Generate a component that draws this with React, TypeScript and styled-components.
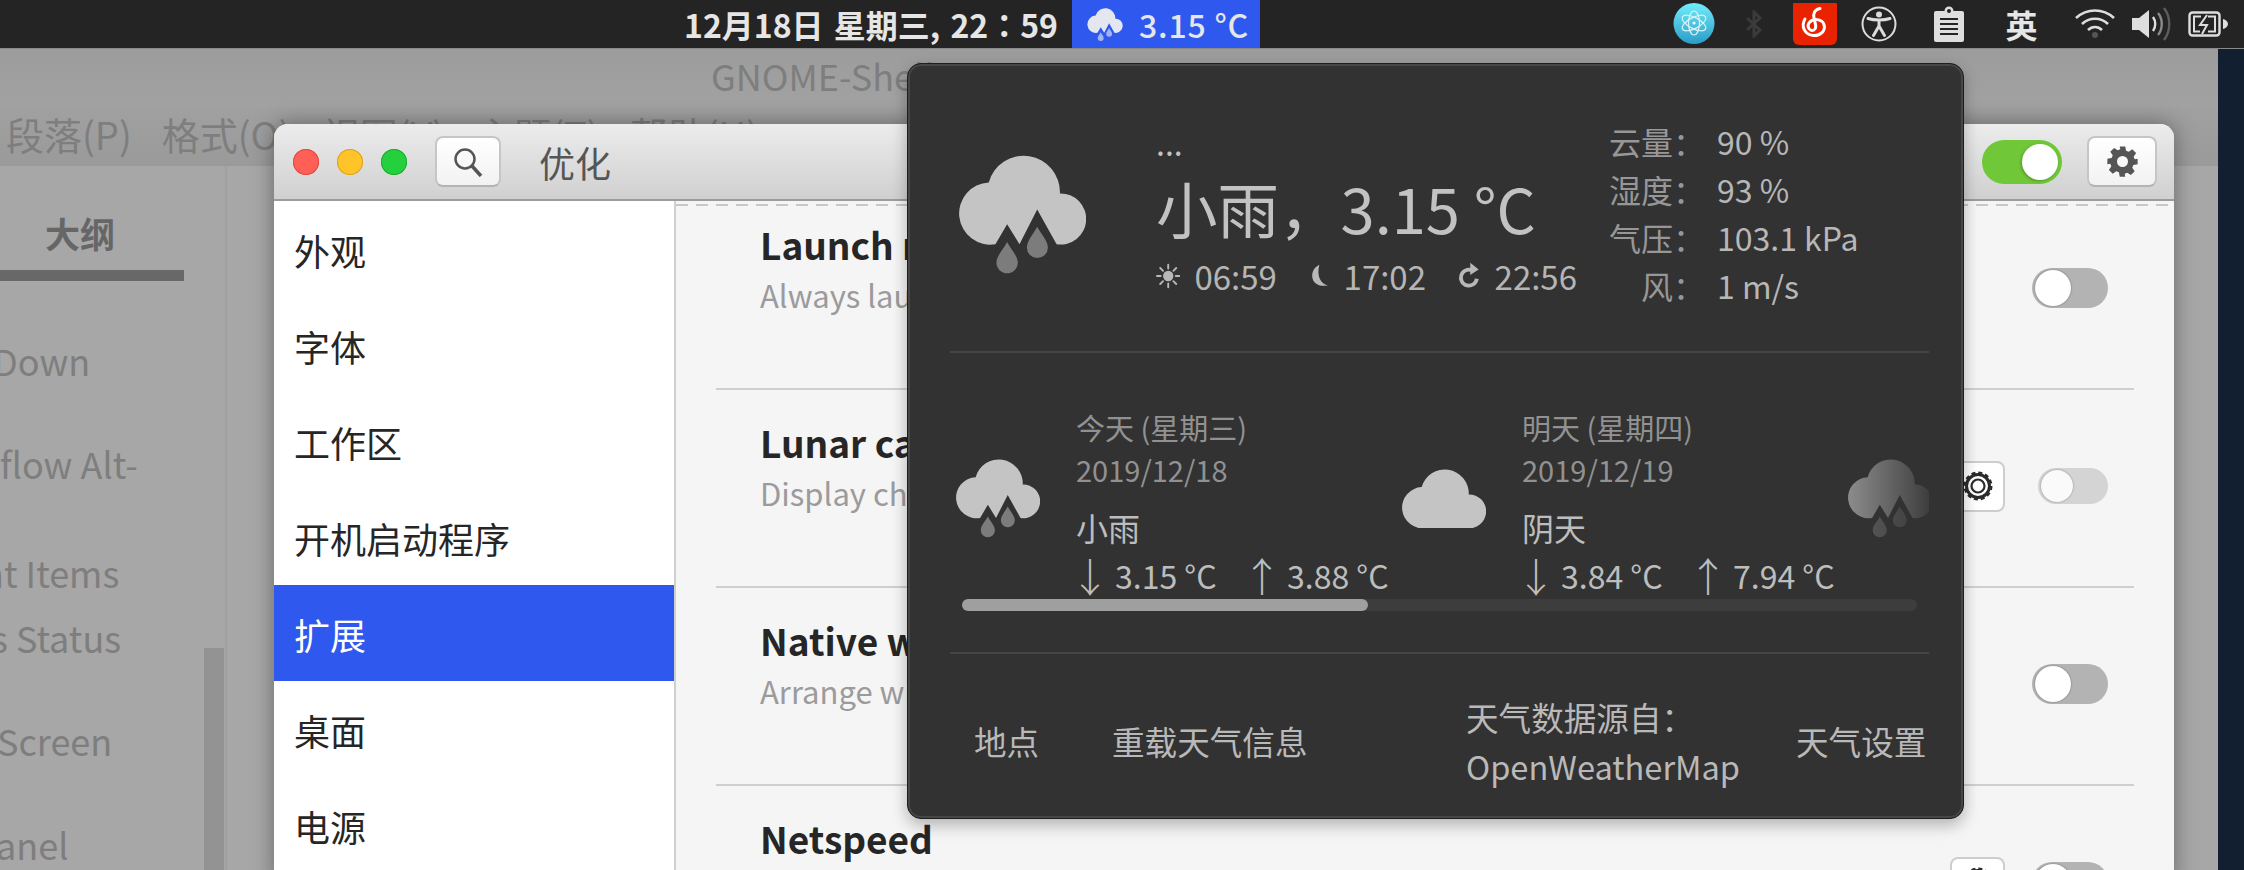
import React from 'react';
import styled, { createGlobalStyle } from 'styled-components';

const FONT = `"Noto Sans CJK SC", "Noto Sans", sans-serif`;

const Global = createGlobalStyle`
  html, body { margin: 0; padding: 0; background: #111f30; }
  body { font-family: ${FONT}; overflow: hidden; }
`;

const Screen = styled.div`
  position: relative;
  width: 2244px;
  height: 870px;
  overflow: hidden;
  background: #111f30;
  font-family: ${FONT};
`;

/* ---------- top bar ---------- */
const TopBar = styled.header`
  position: relative;
  z-index: 5;
  height: 48px;
  background: #242424;
  display: flex;
  align-items: stretch;
  padding-left: 684px;
  color: #e6e6e6;
  font-size: 32px;
  font-weight: 700;
  line-height: 48px;
  box-shadow: 0 1px 0 #8a8a8a;
`;
const Clock = styled.div`
  white-space: pre;
  width: 388px;
  word-spacing: 3px;
`;
const ClockColon = styled.span`
  font-family: "Noto Sans CJK TC", sans-serif;
  font-weight: 700;
`;
const WeatherButton = styled.div`
  width: 188px;
  background: #2f58ee;
  display: flex;
  align-items: center;
  padding-left: 15px;
  box-sizing: border-box;
  font-weight: 500;
  gap: 16px;
  letter-spacing: 0.8px;
`;
const Tray = styled.div`
  margin-left: auto;
  display: flex;
  align-items: stretch;
`;
const TraySlot = styled.div<{ $w: number }>`
  width: ${p => p.$w}px;
  display: flex;
  align-items: center;
  justify-content: center;
  overflow: hidden;
`;

/* ---------- dimmed window behind ---------- */
const BackWindow = styled.section`
  position: absolute;
  left: 0;
  top: 48px;
  width: 2218px;
  height: 822px;
  background: #a7a7a7;
  display: flex;
  flex-direction: column;
  color: #7e7e7e;
  overflow: hidden;
`;
const BackTitle = styled.div`
  height: 60px;
  background: linear-gradient(#9c9c9c, #a2a2a2);
  padding-left: 711px;
  font-size: 36px;
  line-height: 54px;
`;
const BackMenu = styled.div`
  height: 58px;
  background: linear-gradient(#a0a0a0, #9a9a9a);
  display: flex;
  gap: 30px;
  padding-left: 6px;
  font-size: 38px;
  line-height: 52px;
`;
const BackBody = styled.div`
  position: relative;
  flex: 1;
  display: flex;
`;
const BackSide = styled.div`
  position: relative;
  width: 225px;
  height: 100%;
  border-right: 2px solid #a0a0a0;
  overflow: hidden;
`;
const OutlineTab = styled.div`
  width: 139px;
  height: 104px;
  border-bottom: 11px solid #686868;
  padding-left: 45px;
  font-size: 35px;
  font-weight: 700;
  line-height: 134px;
  color: #666;
`;
const BackList = styled.div`
  display: flex;
  flex-direction: column;
`;
const BackItem = styled.div<{ $mt: number; $shift?: number }>`
  margin-top: ${p => p.$mt}px;
  margin-left: ${p => p.$shift ?? 0}px;
  font-size: 36px;
  line-height: 52px;
  height: 52px;
  white-space: nowrap;
  color: #7e7e7e;
`;
const BackScroll = styled.div`
  position: absolute;
  right: 1px;
  top: 482px;
  width: 20px;
  bottom: 0;
  background: #939393;
`;

/* ---------- tweak tool window ---------- */
const Tweaks = styled.section`
  position: absolute;
  left: 274px;
  top: 124px;
  width: 1900px;
  height: 760px;
  border-radius: 14px 14px 0 0;
  box-shadow: 0 0 22px rgba(0, 0, 0, 0.38);
  background: #f5f5f5;
  display: flex;
  flex-direction: column;
  overflow: hidden;
`;
const TitleBar = styled.div`
  flex: none;
  height: 75px;
  border-bottom: 2px solid #9c9c9c;
  background: linear-gradient(#ececec, #d0d0d0);
  display: flex;
  align-items: center;
  padding: 0 17px 0 19px;
`;
const Dots3 = styled.div`
  display: flex;
  gap: 18px;
  margin-right: 28px;
`;
const Dot = styled.span<{ $c: string; $b: string }>`
  width: 26px;
  height: 26px;
  border-radius: 50%;
  background: ${p => p.$c};
  box-shadow: inset 0 0 0 1px ${p => p.$b};
`;
const TitleButton = styled.div<{ $w: number }>`
  width: ${p => p.$w}px;
  height: 51px;
  box-sizing: border-box;
  border: 2px solid #c6c6c6;
  border-bottom-color: #b4b4b4;
  border-radius: 8px;
  background: linear-gradient(#ffffff, #f2f2f2);
  display: flex;
  align-items: center;
  justify-content: center;
`;
const WinTitle = styled.div`
  margin-left: 38px;
  font-size: 36px;
  color: #555;
  flex: 1;
  line-height: 50px;
`;
const GreenToggle = styled.div`
  width: 80px;
  height: 44px;
  border-radius: 22px;
  background: #70c738;
  display: flex;
  justify-content: flex-end;
  align-items: center;
  padding-right: 4px;
  box-sizing: border-box;
  margin-right: 25px;
  &::after {
    content: '';
    width: 36px;
    height: 36px;
    border-radius: 50%;
    background: #fff;
    box-shadow: -1px 1px 3px rgba(0, 0, 0, 0.25);
  }
`;
const Body = styled.div`
  flex: 1;
  min-height: 0;
  display: flex;
`;
const Sidebar = styled.nav`
  flex: none;
  width: 400px;
  background: #fff;
  border-right: 2px solid #cfcfcf;
  display: flex;
  flex-direction: column;
`;
const SideItem = styled.div<{ $active?: boolean }>`
  flex: none;
  height: 96px;
  padding-left: 20px;
  font-size: 36px;
  line-height: 98px;
  color: ${p => (p.$active ? '#ffffff' : '#262626')};
  background: ${p => (p.$active ? '#2f58ef' : 'transparent')};
`;
const Pane = styled.div`
  position: relative;
  flex: 1;
  min-width: 0;
  overflow: hidden;
  &::before {
    content: '';
    position: absolute;
    z-index: 1;
    top: 3px;
    left: 0;
    right: 0;
    height: 2px;
    background: repeating-linear-gradient(to right, #c8c8c8 0 12px, transparent 12px 20px);
  }
`;
const Rows = styled.div`
  margin: -9px 40px 0;
  display: flex;
  flex-direction: column;
`;
const Row = styled.div`
  flex: none;
  height: 198px;
  box-sizing: border-box;
  border-bottom: 2px solid #cfcfcf;
  display: flex;
  align-items: center;
  padding: 0 26px 4px 44px;
`;
const RowText = styled.div`
  flex: 1;
  min-width: 0;
  margin-top: -36px;
`;
const RowTitle = styled.div`
  font-size: 37px;
  font-weight: 700;
  line-height: 50px;
  color: #262626;
`;
const RowDesc = styled.div`
  font-size: 31px;
  line-height: 52px;
  color: #9b9b9b;
`;
const RowGear = styled.div<{ $dim?: boolean }>`
  width: 55px;
  height: 51px;
  box-sizing: border-box;
  border: 2px solid #cdcdcd;
  border-radius: 8px;
  background: #fff;
  display: flex;
  align-items: center;
  justify-content: center;
  margin-right: ${p => (p.$dim ? 33 : 27)}px;
`;
const Switch = styled.div<{ $dim?: boolean }>`
  width: ${p => (p.$dim ? 70 : 76)}px;
  height: ${p => (p.$dim ? 36 : 40)}px;
  border-radius: 20px;
  background: ${p => (p.$dim ? '#d4d4d4' : '#b3b3b3')};
  display: flex;
  align-items: center;
  padding-left: 3px;
  box-sizing: border-box;
  &::after {
    content: '';
    width: ${p => (p.$dim ? 32 : 36)}px;
    height: ${p => (p.$dim ? 32 : 36)}px;
    border-radius: 50%;
    background: ${p => (p.$dim ? '#fafafa' : '#fff')};
    box-shadow: 0 0 2px rgba(0, 0, 0, 0.4);
  }
`;

/* ---------- weather popover ---------- */
const Popover = styled.section`
  position: absolute;
  z-index: 3;
  left: 907px;
  top: 63px;
  width: 1057px;
  height: 756px;
  box-sizing: border-box;
  border: 1px solid #1e1e1e;
  border-radius: 14px;
  background: #323232;
  box-shadow: inset 0 0 0 2px #474747, 0 6px 16px rgba(0, 0, 0, 0.28);
  display: flex;
  flex-direction: column;
  padding: 0 34px 0 42px;
  color: #c2c2c2;
  overflow: hidden;
`;
const Current = styled.div`
  flex: none;
  height: 287px;
  display: flex;
  align-items: center;
`;
const BigIcon = styled.div`
  flex: none;
  margin-left: 9px;
  margin-top: 14px;
  width: 197px;
  line-height: 0;
`;
const CurrentInfo = styled.div`
  flex: none;
  width: 453px;
  margin-top: 4px;
`;
const Dots = styled.div`
  font-size: 32px;
  line-height: 40px;
  color: #c2c2c2;
`;
const Summary = styled.div`
  font-size: 61.5px;
  line-height: 92px;
  white-space: nowrap;
`;
const SunRow = styled.div`
  display: flex;
  align-items: center;
  font-size: 33px;
  line-height: 44px;
  color: #b5b5b5;
  white-space: nowrap;
`;
const SunTime = styled.span`
  margin: 0 32px 0 14px;
`;
const Stats = styled.div`
  display: grid;
  grid-template-columns: 96px auto;
  column-gap: 12px;
  row-gap: 0;
  margin-top: 11px;
  font-size: 32px;
  line-height: 48px;
`;
const StatLabel = styled.span`
  text-align: right;
  color: #979797;
`;
const StatValue = styled.span`
  color: #b7b7b7;
  white-space: nowrap;
`;
const Divider = styled.div`
  flex: none;
  height: 2px;
  background: #454545;
`;
const Forecast = styled.div`
  flex: none;
  height: 299px;
  position: relative;
`;
const ForecastStrip = styled.div`
  display: flex;
  height: 100%;
  overflow: hidden;
  padding-left: 6px;
`;
const Day = styled.div`
  flex: none;
  width: 446px;
  display: flex;
  align-items: center;
`;
const DayIcon = styled.div<{ $fade?: boolean }>`
  flex: none;
  width: 120px;
  line-height: 0;
  margin-top: -8px;
  ${p =>
    p.$fade
      ? `mask-image: linear-gradient(to right, rgba(0,0,0,.62) 0, rgba(0,0,0,.08) 82px);`
      : ''}
`;
const DayText = styled.div`
  flex: none;
  white-space: nowrap;
  margin-top: -1px;
`;
const DayLine = styled.div<{ $muted?: boolean; $h: number; $size: number }>`
  font-size: ${p => p.$size}px;
  line-height: ${p => p.$h}px;
  color: ${p => (p.$muted ? '#919191' : '#bdbdbd')};
`;
const Temps = styled.div`
  display: flex;
  margin-top: -13px;
  font-size: 32px;
  line-height: 48px;
  color: #bdbdbd;
`;
const Temp = styled.span`
  display: flex;
  width: 172px;
  align-items: center;
`;
const Arrow = styled.span`
  width: 37px;
  font-size: 40px;
  font-weight: 300;
  line-height: 48px;
  margin-left: -6px;
  margin-right: 8px;
`;
const Scrollbar = styled.div`
  position: absolute;
  left: 12px;
  right: 12px;
  bottom: 41px;
  height: 12px;
  border-radius: 6px;
  background: #3d3d3d;
`;
const ScrollThumb = styled.div`
  width: 406px;
  height: 100%;
  border-radius: 6px;
  background: #9f9f9f;
`;
const Footer = styled.div`
  flex: 1;
  display: grid;
  grid-template-columns: 138px 354px 330px auto;
  align-items: center;
  padding: 9px 0 0 24px;
  font-size: 32.6px;
  color: #b9b9b9;
  line-height: 49px;
`;

/* ---------- drawings ---------- */
const LOBES = 'M225 337A93.2 93.2 0 1 1 205 152A108.5 108.5 0 0 1 418 185A76.5 76.5 0 1 1 408 337';
const CLOUD_RAIN = `${LOBES}L350 233L297 337L260 277Z`;
const CLOUD = `${LOBES}Z`;

const RainIcon = ({ w }: { w: number }) => (
  <svg width={w} height={(w * 355) / 380} viewBox="116 70 380 355">
    <path d={CLOUD_RAIN} fill="#c4c4c4" />
    <path d="M260 330C250 350 228 372 228 392A32 32 0 0 0 292 392C292 372 270 350 260 330Z" fill="#7c7c7c" />
    <path d="M350 285C340 305 319 327 319 347A31 31 0 0 0 382 347C382 327 360 305 350 285Z" fill="#7c7c7c" />
  </svg>
);
const CloudIcon = ({ w }: { w: number }) => (
  <svg width={w} height={(w * 268) / 380} viewBox="116 70 380 268">
    <path d={CLOUD} fill="#c4c4c4" />
  </svg>
);
const SunIcon = () => (
  <svg width="26" height="26" viewBox="0 0 26 26" stroke="#b8b8b8" strokeWidth="2" strokeLinecap="round">
    <circle cx="13" cy="13" r="5.5" fill="#b8b8b8" stroke="none" />
    <path d="M13 1v4M13 21v4M1 13h4M21 13h4M4.5 4.5l3 3M18.5 18.5l3 3M21.5 4.5l-3 3M7.5 18.5l-3 3" />
  </svg>
);
const MoonIcon = () => (
  <svg width="22" height="26" viewBox="0 0 22 26">
    <path d="M11 1C5 4 3 9 3.5 14C4 20 10 25 20 23C12 21 8 13 11 1Z" fill="#b8b8b8" />
  </svg>
);
const RedoIcon = () => (
  <svg width="24" height="28" viewBox="0 0 24 28" fill="none">
    <path d="M15 8A8.5 8.5 0 1 0 20 17" stroke="#b8b8b8" strokeWidth="4" />
    <path d="M13 0L22 7L13 13Z" fill="#b8b8b8" />
  </svg>
);
const SearchIcon = () => (
  <svg width="30" height="30" viewBox="0 0 30 30" fill="none" stroke="#555" strokeWidth="2.5">
    <circle cx="12" cy="12" r="9.5" />
    <path d="M19 19l9 10" strokeWidth="3.5" />
  </svg>
);
const GearIcon = ({ size, color }: { size: number; color: string }) => (
  <svg width={size} height={size} viewBox="0 0 24 24">
    <path
      fill={color}
      fillRule="evenodd"
      d="M10 1h4l.6 3.1 1.9.8 2.6-1.8 2.8 2.8-1.8 2.6.8 1.9L23 10v4l-3.1.6-.8 1.9 1.8 2.6-2.8 2.8-2.6-1.8-1.9.8L14 23h-4l-.6-3.1-1.9-.8-2.6 1.8-2.8-2.8 1.8-2.6-.8-1.9L1 14v-4l3.1-.6.8-1.9-1.8-2.6 2.8-2.8 2.6 1.8 1.9-.8zM12 8a4 4 0 1 0 0 8 4 4 0 0 0 0-8z"
    />
  </svg>
);
const RingGear = () => (
  <svg width="30" height="30" viewBox="0 0 30 30" fill="none">
    <circle cx="15" cy="15" r="11.5" stroke="#2b2b2b" strokeWidth="3" />
    <circle cx="15" cy="15" r="13.2" stroke="#2b2b2b" strokeWidth="2.6" strokeDasharray="4 2.9" />
    <circle cx="15" cy="15" r="6.5" stroke="#2b2b2b" strokeWidth="2.2" />
  </svg>
);
const AtomIcon = () => (
  <svg width="42" height="42" viewBox="0 0 42 42" fill="none">
    <defs>
      <linearGradient id="atomBg" x1="0" y1="0" x2="0" y2="1">
        <stop offset="0" stopColor="#72edfb" />
        <stop offset="1" stopColor="#2a9cc6" />
      </linearGradient>
    </defs>
    <circle cx="21" cy="20.5" r="20.5" fill="url(#atomBg)" />
    <g stroke="#d9f3f7" strokeWidth="1.2">
      <ellipse cx="21" cy="20" rx="13" ry="5.5" transform="rotate(28 21 20)" />
      <ellipse cx="21" cy="20" rx="13" ry="5.5" transform="rotate(-28 21 20)" />
      <ellipse cx="21" cy="20" rx="5.5" ry="12" />
    </g>
    <circle cx="21" cy="20" r="1.6" fill="#e8fafc" />
  </svg>
);
const BluetoothIcon = () => (
  <svg width="16" height="28" viewBox="0 0 16 28" fill="none" stroke="#3b3b3b" strokeWidth="3">
    <path d="M1 8l13 12-6 6V2l6 6L1 20" />
  </svg>
);
const NeteaseIcon = () => (
  <svg width="44" height="42" viewBox="0 0 44 42" fill="none">
    <rect y="-4" width="44" height="46" rx="6" fill="#e92200" />
    <path
      d="M27 5.5C21.5 6.5 20 10.5 21 15C22 20 24.5 25 21 27C17 29 13.5 24 16 20C19.5 15 29 15.5 31 21.5C33 28 27 33 20.5 32.5C12 32 7.5 23.5 12 16"
      stroke="#fff"
      strokeWidth="3"
      strokeLinecap="round"
    />
  </svg>
);
const AccessIcon = () => (
  <svg width="36" height="36" viewBox="0 0 36 36" fill="none">
    <circle cx="18" cy="18" r="16.5" stroke="#dcdcdc" strokeWidth="2" />
    <circle cx="18" cy="8.5" r="3" fill="#dcdcdc" />
    <path d="M7 12.5C13 14.5 23 14.5 29 12.5M18 14v7M18 20L12.5 29.5M18 20L23.5 29.5" stroke="#dcdcdc" strokeWidth="3" strokeLinecap="round" />
  </svg>
);
const ClipIcon = () => (
  <svg width="30" height="36" viewBox="0 0 30 36">
    <path fill="#dedede" d="M2 5h8.5a4.500 4.500 0 0 1 9 0H28a2 2 0 0 1 2 2v27a2 2 0 0 1-2 2H2a2 2 0 0 1-2-2V7a2 2 0 0 1 2-2z" />
    <circle cx="15" cy="5" r="2" fill="#242424" />
    <path stroke="#242424" strokeWidth="2" d="M6 13h18M6 18h18M6 23h18M6 28h18" />
  </svg>
);
const WifiIcon = () => (
  <svg width="40" height="30" viewBox="0 0 40 30" fill="none" strokeWidth="2.6">
    <path d="M1 9C12 -1 28 -1 39 9" stroke="#dedede" />
    <path d="M7 15C14 8 26 8 33 15" stroke="#dedede" />
    <path d="M13 21C17 17 23 17 27 21" stroke="#dedede" />
    <circle cx="20" cy="26" r="3" fill="#555" />
  </svg>
);
const VolumeIcon = () => (
  <svg width="40" height="36" viewBox="0 0 40 36" fill="none">
    <path d="M0 12h7L17 4v28L7 24H0z" fill="#dedede" />
    <path d="M21 11C24 15 24 21 21 25" stroke="#dedede" strokeWidth="2.4" />
    <path d="M26 7C31 13 31 23 26 29" stroke="#8a8a8a" strokeWidth="2.4" />
    <path d="M32 2C39 11 39 25 32 34" stroke="#5c5c5c" strokeWidth="2.4" />
  </svg>
);
const BatteryIcon = () => (
  <svg width="40" height="26" viewBox="0 0 40 26" fill="none">
    <rect x="1.5" y="1.5" width="30" height="23" rx="3" stroke="#dedede" strokeWidth="2.4" />
    <path d="M35 8c3 .5 5 3 5 5s-2 4.5-5 5z" fill="#dedede" />
    <path d="M13 5.5H6v15h6M20 5.5h7v15h-7" stroke="#dedede" strokeWidth="2" />
    <path d="M19 4L12 14h7l-5 9" stroke="#dedede" strokeWidth="2" />
  </svg>
);
const SmallWeather = () => (
  <svg width="36" height="33" viewBox="116 70 380 355">
    <path d={CLOUD_RAIN} fill="#e4e6f0" />
    <path d="M260 330C250 350 228 372 228 392A32 32 0 0 0 292 392C292 372 270 350 260 330Z" fill="#a4b4ee" />
    <path d="M350 285C340 305 319 327 319 347A31 31 0 0 0 382 347C382 327 360 305 350 285Z" fill="#a4b4ee" />
  </svg>
);

const sideItems = ['外观', '字体', '工作区', '开机启动程序', '扩展', '桌面', '电源'];

const rows = [
  { title: 'Launch new instance', desc: 'Always launch a new instance' },
  { title: 'Lunar calendar', desc: 'Display chinese lunar calendar', gear: true, dim: true },
  { title: 'Native window placement', desc: 'Arrange windows using native placement' },
  { title: 'Netspeed', desc: 'Display network speed', gear: true },
];

const stats = [
  ['云量：', '90 %'],
  ['湿度：', '93 %'],
  ['气压：', '103.1 kPa'],
  ['风：', '1 m/s'],
];

export default function App() {
  return (
    <Screen>
      <Global />
      <TopBar>
        <Clock>12月18日 星期三, 22<ClockColon>：</ClockColon>59</Clock>
        <WeatherButton>
          <SmallWeather />
          <span>3.15 °C</span>
        </WeatherButton>
        <Tray>
          <TraySlot $w={60}><AtomIcon /></TraySlot>
          <TraySlot $w={60}><BluetoothIcon /></TraySlot>
          <TraySlot $w={62}><NeteaseIcon /></TraySlot>
          <TraySlot $w={66}><AccessIcon /></TraySlot>
          <TraySlot $w={73}><ClipIcon /></TraySlot>
          <TraySlot $w={73}>英</TraySlot>
          <TraySlot $w={74}><WifiIcon /></TraySlot>
          <TraySlot $w={40}><VolumeIcon /></TraySlot>
          <TraySlot $w={72}><BatteryIcon /></TraySlot>
        </Tray>
      </TopBar>

      <BackWindow>
        <BackTitle>GNOME-Shell</BackTitle>
        <BackMenu>
          <span>段落(P)</span>
          <span>格式(O)</span>
          <span>视图(V)</span>
          <span>主题(T)</span>
          <span>帮助(H)</span>
        </BackMenu>
        <BackBody>
          <BackSide>
            <OutlineTab>大纲</OutlineTab>
            <BackList>
              <BackItem $mt={53} $shift={-7}>Down</BackItem>
              <BackItem $mt={51} $shift={-14}>rflow Alt-</BackItem>
              <BackItem $mt={57} $shift={-18}>nt Items</BackItem>
              <BackItem $mt={13} $shift={-9}>s Status</BackItem>
              <BackItem $mt={51} $shift={-3}>Screen</BackItem>
              <BackItem $mt={52} $shift={-4}>anel</BackItem>
            </BackList>
            <BackScroll />
          </BackSide>
        </BackBody>
      </BackWindow>

      <Tweaks>
        <TitleBar>
          <Dots3>
            <Dot $c="#ff5f57" $b="#e14942" />
            <Dot $c="#ffc42a" $b="#dba31c" />
            <Dot $c="#25d03f" $b="#1dab30" />
          </Dots3>
          <TitleButton $w={66}><SearchIcon /></TitleButton>
          <WinTitle>优化</WinTitle>
          <GreenToggle />
          <TitleButton $w={70}><GearIcon size={33} color="#555" /></TitleButton>
        </TitleBar>
        <Body>
          <Sidebar>
            {sideItems.map((s, i) => (
              <SideItem key={s} $active={i === 4}>{s}</SideItem>
            ))}
          </Sidebar>
          <Pane>
            <Rows>
              {rows.map(r => (
                <Row key={r.title}>
                  <RowText>
                    <RowTitle>{r.title}</RowTitle>
                    <RowDesc>{r.desc}</RowDesc>
                  </RowText>
                  {r.gear && (
                    <RowGear $dim={r.dim}><RingGear /></RowGear>
                  )}
                  <Switch $dim={r.dim} />
                </Row>
              ))}
            </Rows>
          </Pane>
        </Body>
      </Tweaks>

      <Popover>
        <Current>
          <BigIcon><RainIcon w={127} /></BigIcon>
          <CurrentInfo>
            <Dots>...</Dots>
            <Summary>小雨，3.15 °C</Summary>
            <SunRow>
              <SunIcon />
              <SunTime>06:59</SunTime>
              <MoonIcon />
              <SunTime>17:02</SunTime>
              <RedoIcon />
              <SunTime>22:56</SunTime>
            </SunRow>
          </CurrentInfo>
          <Stats>
            {stats.map(([k, v]) => (
              <React.Fragment key={k}>
                <StatLabel>{k}</StatLabel>
                <StatValue>{v}</StatValue>
              </React.Fragment>
            ))}
          </Stats>
        </Current>
        <Divider />
        <Forecast>
          <ForecastStrip>
            <Day>
              <DayIcon><RainIcon w={84} /></DayIcon>
              <DayText>
                <DayLine $muted $h={42} $size={29}>今天 (星期三)</DayLine>
                <DayLine $muted $h={42} $size={29}>2019/12/18</DayLine>
                <DayLine $h={74} $size={32}>小雨</DayLine>
                <Temps>
                  <Temp><Arrow>↓</Arrow>3.15 °C</Temp>
                  <Temp><Arrow>↑</Arrow>3.88 °C</Temp>
                </Temps>
              </DayText>
            </Day>
            <Day>
              <DayIcon><CloudIcon w={84} /></DayIcon>
              <DayText>
                <DayLine $muted $h={42} $size={29}>明天 (星期四)</DayLine>
                <DayLine $muted $h={42} $size={29}>2019/12/19</DayLine>
                <DayLine $h={74} $size={32}>阴天</DayLine>
                <Temps>
                  <Temp><Arrow>↓</Arrow>3.84 °C</Temp>
                  <Temp><Arrow>↑</Arrow>7.94 °C</Temp>
                </Temps>
              </DayText>
            </Day>
            <Day>
              <DayIcon $fade><RainIcon w={84} /></DayIcon>
            </Day>
          </ForecastStrip>
          <Scrollbar><ScrollThumb /></Scrollbar>
        </Forecast>
        <Divider />
        <Footer>
          <span>地点</span>
          <span>重载天气信息</span>
          <span>天气数据源自：<br />OpenWeatherMap</span>
          <span>天气设置</span>
        </Footer>
      </Popover>
    </Screen>
  );
}
